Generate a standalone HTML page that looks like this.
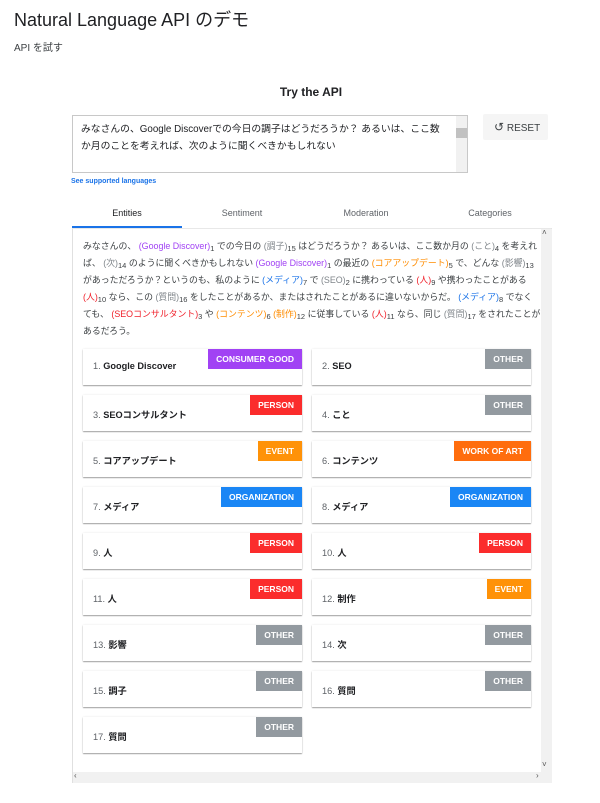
<!DOCTYPE html>
<html><head><meta charset="utf-8"><style>
*{margin:0;padding:0;box-sizing:border-box}
body{width:600px;height:803px;background:#fff;font-family:"Liberation Sans","Noto Sans CJK JP",sans-serif;color:#202124;position:relative;overflow:hidden}
.a{position:absolute}
.p{color:#a142f4}.r{color:#f0202a}.o{color:#ff8c00}.b{color:#1a73e8}.g{color:#80868b}
.para{font-size:8.9px;line-height:17px;color:#3c4043}
.para div{white-space:nowrap;text-align:justify;text-align-last:justify;height:17px}
.para div.l{text-align-last:left}
sub{font-size:7.5px;vertical-align:-2px;color:#3c4043}
.card{position:absolute;width:219px;height:36px;background:#fff;box-shadow:0 1px 1px rgba(0,0,0,.35),0 0 2px rgba(0,0,0,.1)}
.card span.t{position:absolute;left:10px;top:12px;font-size:9.2px;color:#202124;font-weight:bold}
.card span.t i{font-style:normal;font-weight:normal;color:#5f6368}
.bd{position:absolute;right:0;top:0;height:20px;line-height:20px;padding:0 8px;color:#fff;font-size:8.5px;font-weight:bold}
.cg{background:#a142f4}.pe{background:#fb2c2c}.ot{background:#939aa0}.ev{background:#ff9208}.wa{background:#ff6d0d}.or{background:#1a86f5}
</style></head><body>
<div class="a" style="left:14px;top:6px;font-size:18px;">Natural Language API のデモ</div>
<div class="a" style="left:14px;top:39px;font-size:10px;color:#3c4043">API を試す</div>
<div class="a" style="left:0;width:622px;text-align:center;top:85px;font-size:12px;font-weight:bold">Try the API</div>
<div class="a" style="left:72px;top:115px;width:396px;height:58px;border:1px solid #c8c8c8;overflow:hidden">
 <div style="padding:5px 16px 0 8px;font-size:9.8px;line-height:17px;color:#202124;white-space:nowrap">みなさんの、Google Discoverでの今日の調子はどうだろうか？ あるいは、ここ数<br>か月のことを考えれば、次のように聞くべきかもしれない<br><br>Google Discoverの最近のコアアップデートで、どんな影響があっただろうか？</div>
 <div class="a" style="right:0;top:0;width:11px;height:56px;background:#f1f1f1"><div style="margin-top:12px;height:10px;background:#c1c1c1"></div></div>
</div>
<div class="a" style="left:483px;top:114px;width:65px;height:26px;background:#f5f5f5;border-radius:2px;font-size:10px;color:#3c4043;line-height:26px;padding-left:11px"><span style="font-size:12px">↺</span> RESET</div>
<div class="a b" style="left:71px;top:178px;font-size:7px;font-weight:bold">See supported languages</div>
<div class="a" style="top:208px;left:102px;width:50px;text-align:center;font-size:9px;color:#202124">Entities</div>
<div class="a" style="top:208px;left:212px;width:60px;text-align:center;font-size:9px;color:#5f6368">Sentiment</div>
<div class="a" style="top:208px;left:331px;width:70px;text-align:center;font-size:9px;color:#5f6368">Moderation</div>
<div class="a" style="top:208px;left:455px;width:70px;text-align:center;font-size:9px;color:#5f6368">Categories</div>
<div class="a" style="left:72px;top:226px;width:110px;height:2px;background:#1a73e8"></div>
<div class="a" style="left:72px;top:228px;width:480px;height:555px;border:1px solid #e0e0e0;border-top:1px solid #e8e8e8"></div>
<div class="a" style="left:541px;top:229px;width:11px;height:543px;background:#f1f1f1"></div>
<div class="a" style="left:73px;top:772px;width:479px;height:11px;background:#f1f1f1"></div>
<div class="a" style="left:542px;top:228px;font-size:8px;color:#555">˄</div>
<div class="a" style="left:542px;top:760px;font-size:8px;color:#555">˅</div>
<div class="a" style="left:74px;top:771px;font-size:8px;color:#555">‹</div>
<div class="a" style="left:536px;top:771px;font-size:8px;color:#555">›</div>
<div class="a para" style="left:83px;top:238px;width:442px">
<div>みなさんの、 <span class="p">(Google Discover)</span><sub>1</sub> での今日の <span class="g">(調子)</span><sub>15</sub> はどうだろうか？ あるいは、ここ数か月の <span class="g">(こと)</span><sub>4</sub> を考えれ</div>
<div>ば、 <span class="g">(次)</span><sub>14</sub> のように聞くべきかもしれない <span class="p">(Google Discover)</span><sub>1</sub> の最近の <span class="o">(コアアップデート)</span><sub>5</sub> で、どんな <span class="g">(影響)</span><sub>13</sub></div>
<div>があっただろうか？というのも、私のように <span class="b">(メディア)</span><sub>7</sub> で <span class="g">(SEO)</span><sub>2</sub> に携わっている <span class="r">(人)</span><sub>9</sub> や携わったことがある</div>
<div><span class="r">(人)</span><sub>10</sub> なら、この <span class="g">(質問)</span><sub>16</sub> をしたことがあるか、またはされたことがあるに違いないからだ。 <span class="b">(メディア)</span><sub>8</sub> でなく</div>
<div>ても、 <span class="r">(SEOコンサルタント)</span><sub>3</sub> や <span class="o">(コンテンツ)</span><sub>6</sub> <span class="o">(制作)</span><sub>12</sub> に従事している <span class="r">(人)</span><sub>11</sub> なら、同じ <span class="g">(質問)</span><sub>17</sub> をされたことが</div>
<div class="l">あるだろう。</div>
</div>

<div class="card" style="left:83px;top:349px"><span class="t"><i>1.</i> Google Discover</span><div class="bd cg">CONSUMER GOOD</div></div>
<div class="card" style="left:312px;top:349px"><span class="t"><i>2.</i> SEO</span><div class="bd ot">OTHER</div></div>
<div class="card" style="left:83px;top:395px"><span class="t"><i>3.</i> SEOコンサルタント</span><div class="bd pe">PERSON</div></div>
<div class="card" style="left:312px;top:395px"><span class="t"><i>4.</i> こと</span><div class="bd ot">OTHER</div></div>
<div class="card" style="left:83px;top:441px"><span class="t"><i>5.</i> コアアップデート</span><div class="bd ev">EVENT</div></div>
<div class="card" style="left:312px;top:441px"><span class="t"><i>6.</i> コンテンツ</span><div class="bd wa">WORK OF ART</div></div>
<div class="card" style="left:83px;top:487px"><span class="t"><i>7.</i> メディア</span><div class="bd or">ORGANIZATION</div></div>
<div class="card" style="left:312px;top:487px"><span class="t"><i>8.</i> メディア</span><div class="bd or">ORGANIZATION</div></div>
<div class="card" style="left:83px;top:533px"><span class="t"><i>9.</i> 人</span><div class="bd pe">PERSON</div></div>
<div class="card" style="left:312px;top:533px"><span class="t"><i>10.</i> 人</span><div class="bd pe">PERSON</div></div>
<div class="card" style="left:83px;top:579px"><span class="t"><i>11.</i> 人</span><div class="bd pe">PERSON</div></div>
<div class="card" style="left:312px;top:579px"><span class="t"><i>12.</i> 制作</span><div class="bd ev">EVENT</div></div>
<div class="card" style="left:83px;top:625px"><span class="t"><i>13.</i> 影響</span><div class="bd ot">OTHER</div></div>
<div class="card" style="left:312px;top:625px"><span class="t"><i>14.</i> 次</span><div class="bd ot">OTHER</div></div>
<div class="card" style="left:83px;top:671px"><span class="t"><i>15.</i> 調子</span><div class="bd ot">OTHER</div></div>
<div class="card" style="left:312px;top:671px"><span class="t"><i>16.</i> 質問</span><div class="bd ot">OTHER</div></div>
<div class="card" style="left:83px;top:717px"><span class="t"><i>17.</i> 質問</span><div class="bd ot">OTHER</div></div>
</body></html>
